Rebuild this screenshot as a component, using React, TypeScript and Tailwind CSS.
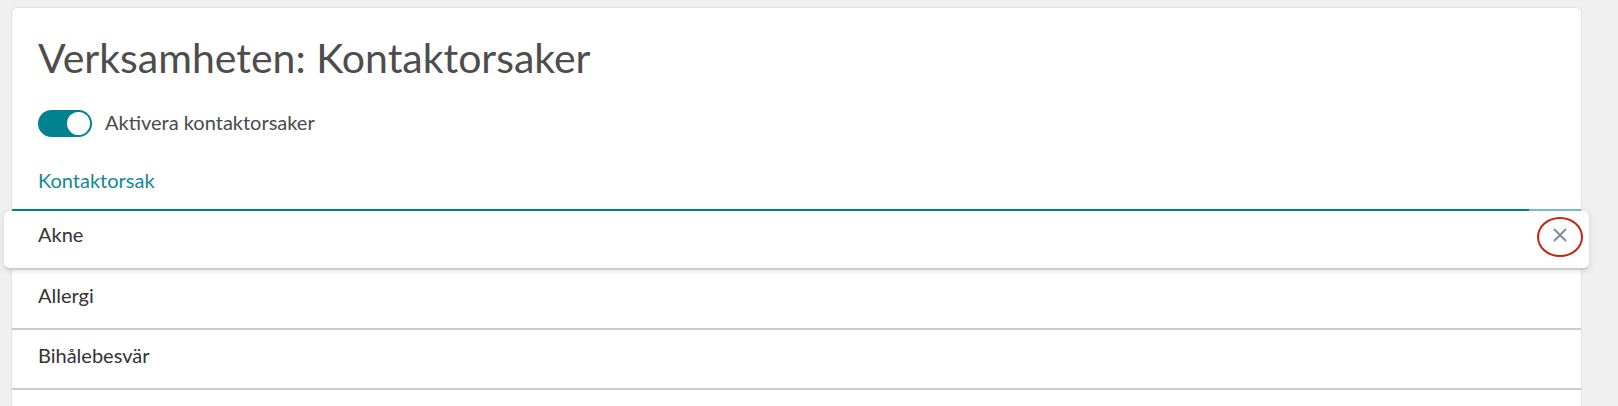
const items = ["Allergi", "Bihålebesvär"];

export default function App() {
  return (
    <div className="h-[406px] overflow-hidden bg-[#f0f0f0] pt-[7px] pl-[11px] font-['Lato',sans-serif]">
      <div className="w-[1571px] rounded-md border border-[#e2e2e2] bg-white">
        <div className="px-[26px] pt-[26px]">
          <h1 className="text-[41px] leading-[48px] font-normal text-[#4d4d4d]">
            Verksamheten: Kontaktorsaker
          </h1>
          <div className="mt-[28px] flex items-center gap-[13px]">
            <button className="flex h-[27px] w-[54px] items-center justify-end rounded-full bg-[#00828f] p-[2px]">
              <span className="h-[23px] w-[23px] rounded-full bg-white" />
            </button>
            <span className="pb-[3px] text-[20px] leading-[24px] text-[#4a4a4a]">Aktivera kontaktorsaker</span>
          </div>
          <div className="mt-[31px] pb-[17px] text-[20px] leading-[24px] text-[#118896]">Kontaktorsak</div>
        </div>

        <div className="flex h-[2px]">
          <div className="flex-1 bg-[#00838f]" />
          <div className="w-[52px] bg-[#80c1c7]" />
        </div>

        <div className="flex flex-col text-[20px] leading-[24px] text-[#333333]">
          <div className="relative z-10 -mx-2 flex items-start justify-between rounded-md border-b-2 border-[#cccccc] bg-white pt-[11px] pb-[22px] pl-[34px] pr-[21px] shadow-[0_1px_6px_rgba(0,0,0,0.12)]">
            <span>Akne</span>
            <div className="relative mt-[2px] flex h-[22px] w-[16px] items-center justify-center">
              <svg width="14" height="14" viewBox="0 0 14 14" className="text-[#7b8b96]">
                <path d="M1.5 1.5 L12.5 12.5 M12.5 1.5 L1.5 12.5" stroke="currentColor" strokeWidth="1.8" strokeLinecap="round" />
              </svg>
              <span className="absolute left-[-15px] top-[-7px] h-[40px] w-[46px] rounded-[50%] border-2 border-[#c0260f]" />
            </div>
          </div>
          {items.map((item) => (
            <div key={item} className="border-b-2 border-[#cccccc] pt-[13px] pb-[21px] pl-[26px]">
              {item}
            </div>
          ))}
          <div className="h-[58px] border-b-2 border-[#cccccc]" />
        </div>
      </div>
    </div>
  );
}
